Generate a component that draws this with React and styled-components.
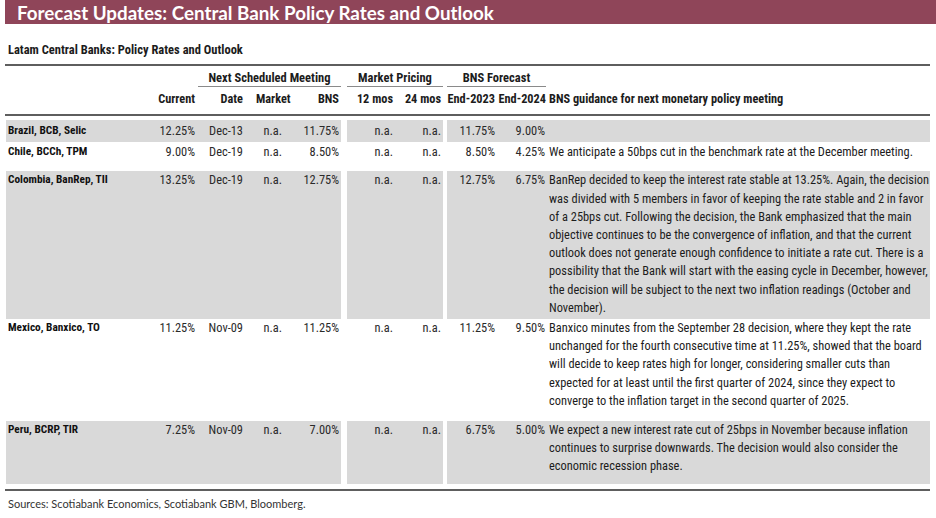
import React from 'react'
import styled, { createGlobalStyle } from 'styled-components'

const Global = createGlobalStyle`
  body {
    margin: 0;
    background: #fff;
    color: #1c1c1c;
    font-family: Roboto, "Liberation Sans", sans-serif;
    font-stretch: condensed;
  }
`

const COLS = '144px 46px 48px 48px 49px 6px 47px 49px 4px 49px 50px 384px'

const TitleBar = styled.div`
  margin-left: 5px;
  height: 24px;
  background: #8f4559;
  color: #fff;
  display: flex;
  align-items: center;
  padding-left: 12px;
  font-family: Lato, sans-serif;
  font-stretch: normal;
  font-weight: 700;
  font-size: 18.8px;
`

const Page = styled.div`
  padding-left: 5px;
  width: 925px;
`

const Subtitle = styled.div`
  font-weight: 700;
  font-size: 12.5px;
  padding: 19px 0 0 3px;
  height: 21px;
  line-height: 14px;
  box-sizing: content-box;
`

const Rule = styled.div`
  height: 2px;
  background: #5e5e5e;
  margin-top: ${p => p.mt || 0}px;
`

const Grid = styled.div`
  display: grid;
  grid-template-columns: ${COLS};
  grid-template-rows: 21px 27px;
  padding-left: 1px;
`

const GroupHead = styled.div`
  grid-row: 1;
  grid-column: ${p => p.span};
  margin-left: ${p => p.ml || 0}px;
  text-align: center;
  font-weight: 700;
  font-size: 12.5px;
  line-height: 16px;
  padding-top: 4px;
  box-sizing: border-box;
  border-bottom: 1px solid #8a8a8a;
`

const ColHead = styled.div`
  grid-row: 2;
  grid-column: ${p => p.col};
  font-weight: 700;
  font-size: 12.3px;
  line-height: 16px;
  padding: 4px ${p => p.pr || 0}px 0 ${p => p.pl || 0}px;
  text-align: ${p => p.left ? 'left' : 'right'};
  white-space: nowrap;
`

const Body = styled.div`
  padding-top: 4px;
`

const Row = styled.div`
  display: grid;
  grid-template-columns: ${COLS};
  padding-left: 1px;
  line-height: 18.2px;
  font-size: 12.4px;
`

const Cell = styled.div`
  background: ${p => p.shade ? '#d9d9d9' : 'transparent'};
  padding: ${p => p.pt}px ${p => p.pr || 0}px ${p => p.pb}px ${p => p.pl || 0}px;
  text-align: ${p => p.left ? 'left' : 'right'};
  white-space: nowrap;
  font-weight: ${p => p.bold ? 700 : 400};
  font-size: ${p => p.bold ? '11.3px' : 'inherit'};
  color: ${p => p.bold ? '#111' : '#2a2a2a'};
`

const Gap = styled.div``

const Guide = styled.div`
  white-space: nowrap;
  color: #1c1c1c;
`

const Sources = styled.div`
  font-family: Lato, sans-serif;
  font-stretch: normal;
  font-size: 11px;
  color: #333;
  padding: 6px 0 0 3px;
`

const rows = [
  {
    name: 'Brazil, BCB, Selic', shade: true, pt: 2, pb: 2,
    v: ['12.25%', 'Dec-13', 'n.a.', '11.75%', 'n.a.', 'n.a.', '11.75%', '9.00%'],
    text: [],
  },
  {
    name: 'Chile, BCCh, TPM', shade: false, pt: 1, pb: 10,
    v: ['9.00%', 'Dec-19', 'n.a.', '8.50%', 'n.a.', 'n.a.', '8.50%', '4.25%'],
    text: ['We anticipate a 50bps cut in the benchmark rate at the December meeting.'],
  },
  {
    name: 'Colombia, BanRep, TII', shade: true, pt: 0, pb: 2,
    v: ['13.25%', 'Dec-19', 'n.a.', '12.75%', 'n.a.', 'n.a.', '12.75%', '6.75%'],
    text: [
      'BanRep decided to keep the interest rate stable at 13.25%. Again, the decision',
      'was divided with 5 members in favor of keeping the rate stable and 2 in favor',
      'of a 25bps cut. Following the decision, the Bank emphasized that the main',
      'objective continues to be the convergence of inflation, and that the current',
      'outlook does not generate enough confidence to initiate a rate cut. There is a',
      'possibility that the Bank will start with the easing cycle in December, however,',
      'the decision will be subject to the next two inflation readings (October and',
      'November).',
    ],
  },
  {
    name: 'Mexico, Banxico, TO', shade: false, pt: 0, pb: 11,
    v: ['11.25%', 'Nov-09', 'n.a.', '11.25%', 'n.a.', 'n.a.', '11.25%', '9.50%'],
    text: [
      'Banxico minutes from the September 28 decision, where they kept the rate',
      'unchanged for the fourth consecutive time at 11.25%, showed that the board',
      'will decide to keep rates high for longer, considering smaller cuts than',
      'expected for at least until the first quarter of 2024, since they expect to',
      'converge to the inflation target in the second quarter of 2025.',
    ],
  },
  {
    name: 'Peru, BCRP, TIR', shade: true, pt: 0, pb: 8,
    v: ['7.25%', 'Nov-09', 'n.a.', '7.00%', 'n.a.', 'n.a.', '6.75%', '5.00%'],
    text: [
      'We expect a new interest rate cut of 25bps in November because inflation',
      'continues to surprise downwards. The decision would also consider the',
      'economic recession phase.',
    ],
  },
]

// right padding per value column, to land on the reference's right edges
const valuePad = [1, 1, 10, 2, 1, 2, 1, 1]

function DataRow({ r }) {
  const c = (i) => (
    <Cell key={i} shade={r.shade} pt={r.pt} pb={r.pb} pr={valuePad[i]}>{r.v[i]}</Cell>
  )
  return (
    <Row>
      <Cell shade={r.shade} pt={r.pt} pb={r.pb} pl={2} left bold>{r.name}</Cell>
      {c(0)}{c(1)}{c(2)}{c(3)}
      <Gap />
      {c(4)}{c(5)}
      <Gap />
      {c(6)}{c(7)}
      <Cell shade={r.shade} pt={r.pt} pb={r.pb} pl={3} left>
        {r.text.map((t, i) => <Guide key={i}>{t}</Guide>)}
      </Cell>
    </Row>
  )
}

export default function App() {
  return (
    <>
      <Global />
      <TitleBar>Forecast Updates: Central Bank Policy Rates and Outlook</TitleBar>
      <Page>
        <Subtitle>Latam Central Banks: Policy Rates and Outlook</Subtitle>
        <Rule />
        <Grid>
          <GroupHead span="3 / 6" ml={2}>Next Scheduled Meeting</GroupHead>
          <GroupHead span="7 / 9">Market Pricing</GroupHead>
          <GroupHead span="10 / 12">BNS Forecast</GroupHead>
          <ColHead col="2" pr={1}>Current</ColHead>
          <ColHead col="3" pr={1}>Date</ColHead>
          <ColHead col="4" left pl={12}>Market</ColHead>
          <ColHead col="5" pr={2}>BNS</ColHead>
          <ColHead col="7" pr={1}>12 mos</ColHead>
          <ColHead col="8" pr={2}>24 mos</ColHead>
          <ColHead col="10" pr={1}>End-2023</ColHead>
          <ColHead col="11" pr={0}>End-2024</ColHead>
          <ColHead col="12" left pl={3}>BNS guidance for next monetary policy meeting</ColHead>
        </Grid>
        <Rule />
        <Body>
          {rows.map(r => <DataRow key={r.name} r={r} />)}
        </Body>
        <Rule mt={5} />
        <Sources>Sources: Scotiabank Economics, Scotiabank GBM, Bloomberg.</Sources>
      </Page>
    </>
  )
}
